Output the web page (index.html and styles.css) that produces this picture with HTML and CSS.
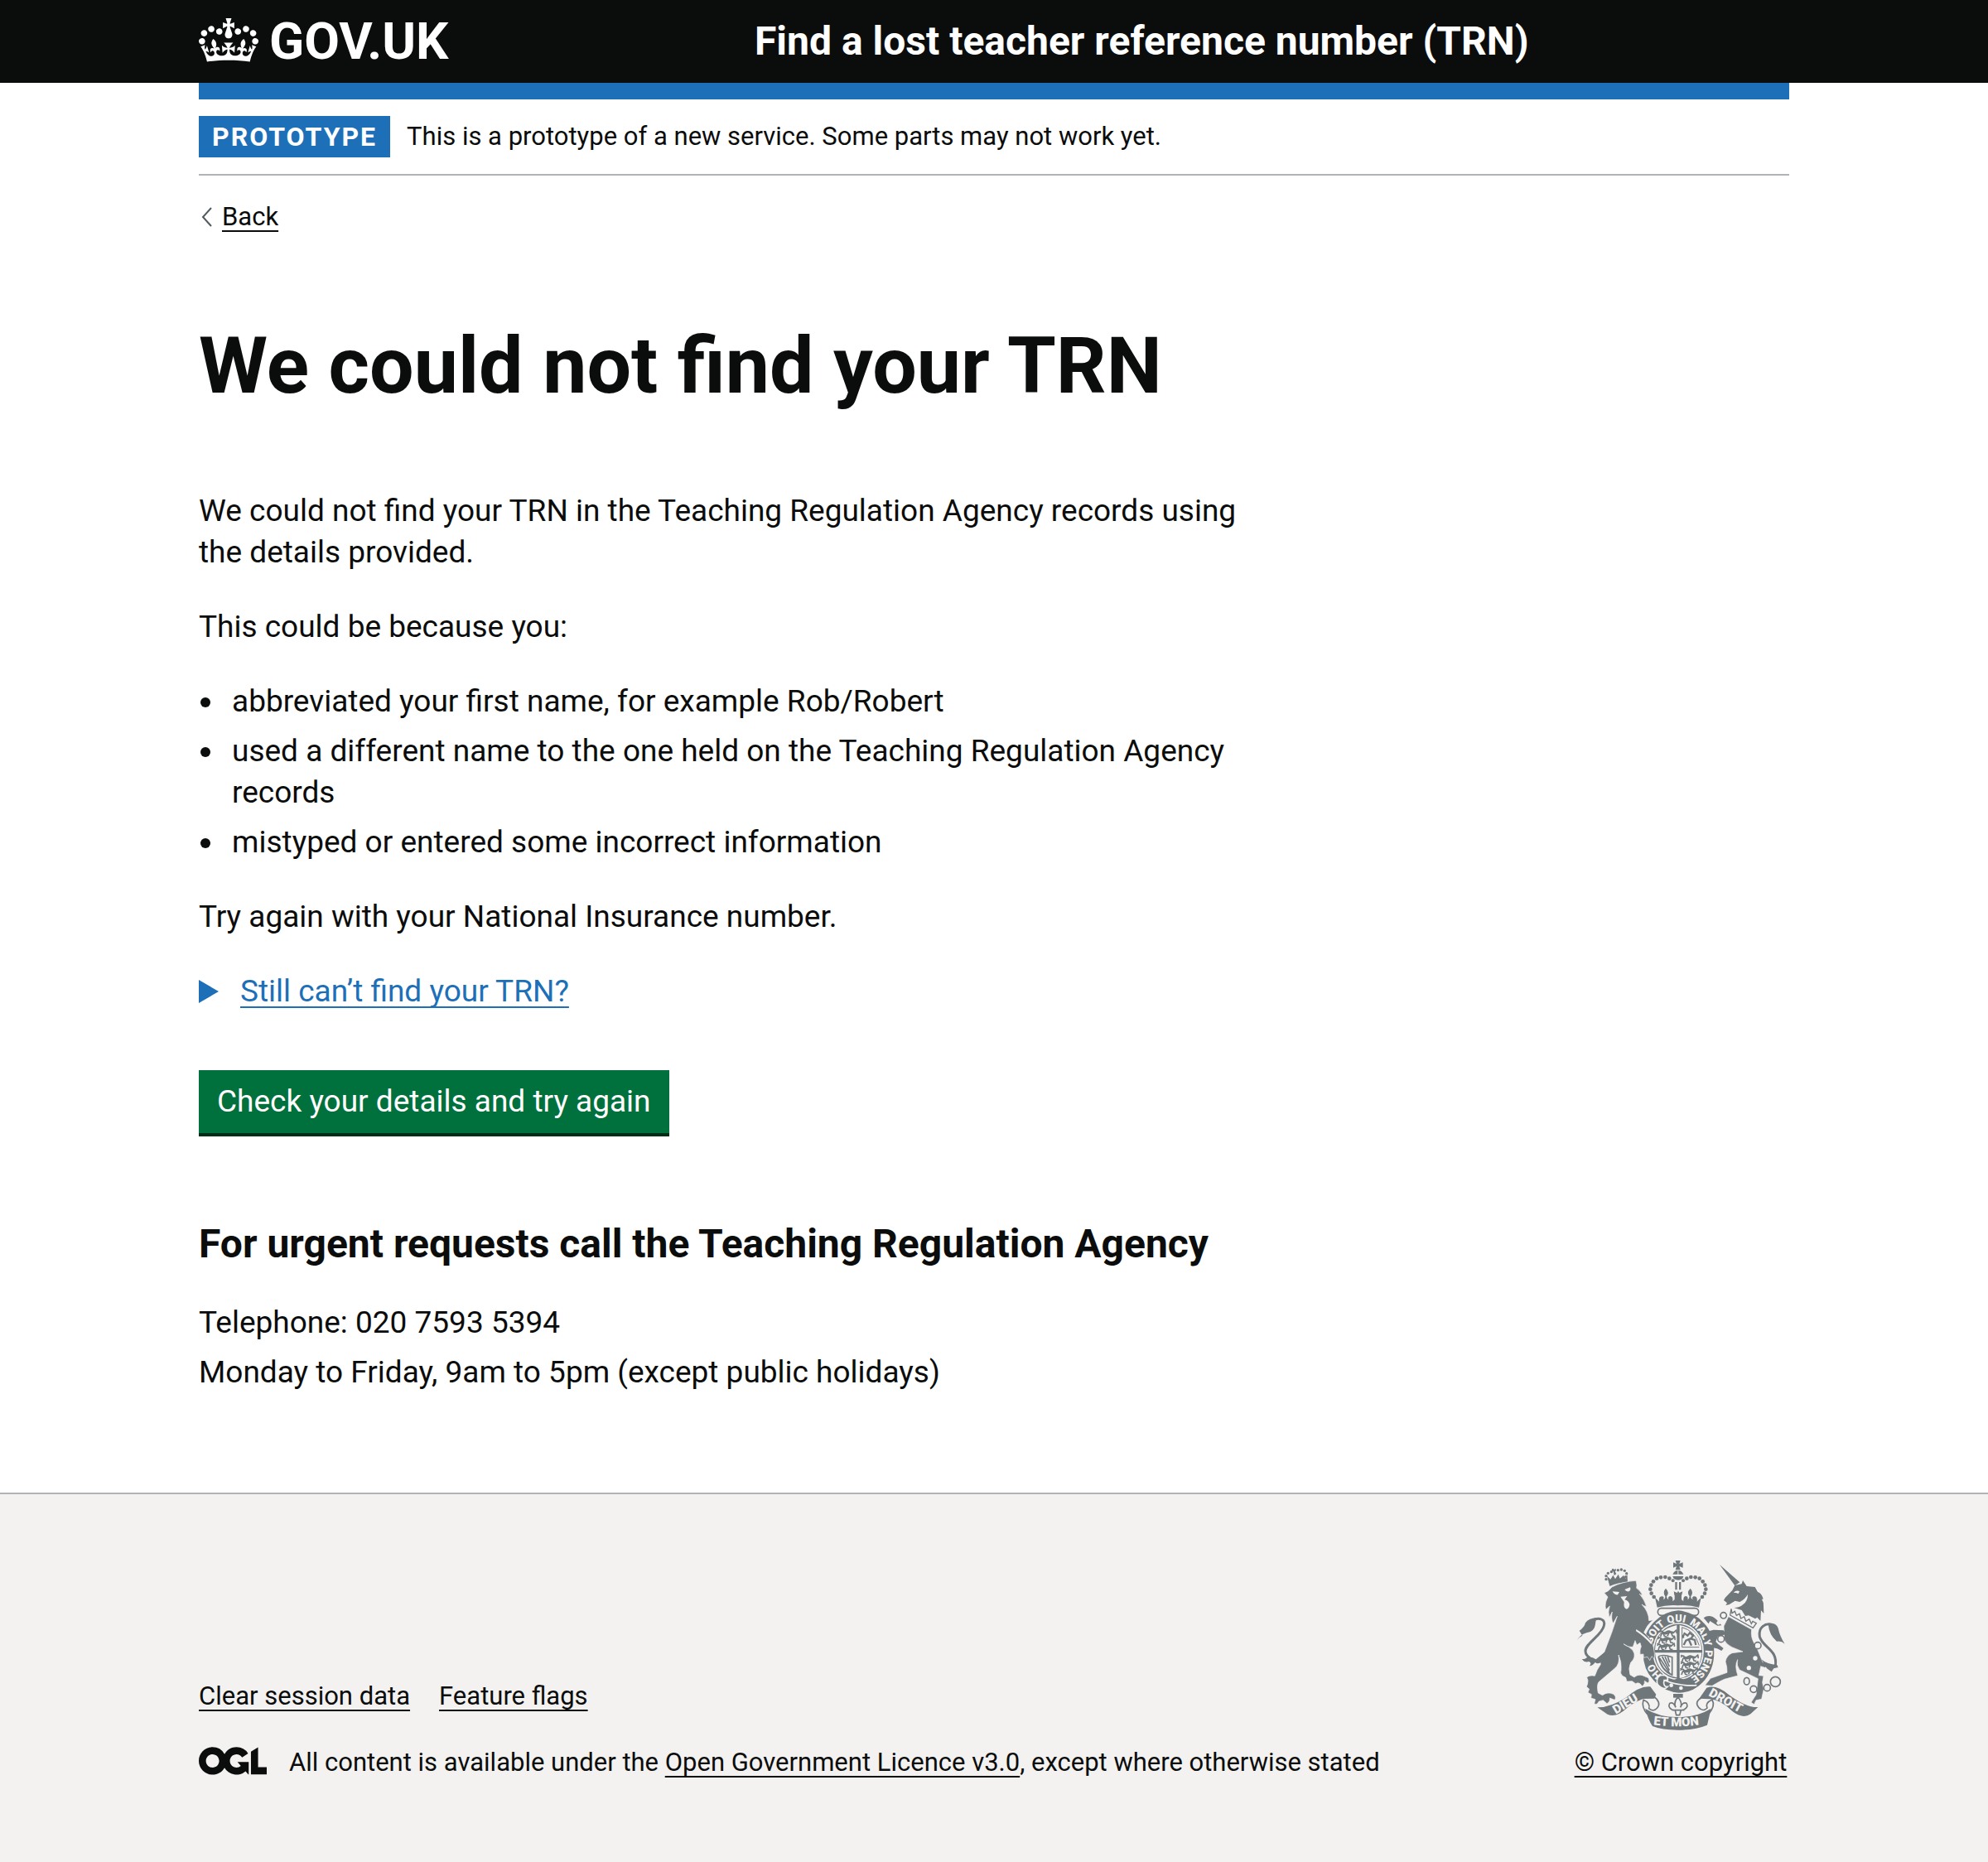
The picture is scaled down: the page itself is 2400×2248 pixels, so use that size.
FILE: index.html
```html
<!DOCTYPE html>
<html lang="en">
<head>
  <meta charset="utf-8">
  <meta name="viewport" content="width=device-width, initial-scale=1">
  <title>We could not find your TRN - GOV.UK</title>
  <link rel="stylesheet" href="styles.css">
</head>
<body>
  <header class="header">
    <div class="container header-inner">
      <a class="logo" href="#" aria-label="GOV.UK">
        <svg class="logo-crown" viewBox="0 0 132 97" aria-hidden="true"><path fill="currentColor" fill-rule="evenodd" d="M25 30.2c3.5 1.5 7.7-.2 9.1-3.7 1.5-3.6-.2-7.8-3.9-9.2-3.6-1.4-7.6.3-9.1 3.9-1.4 3.5.3 7.5 3.9 9zM9 39.5c3.6 1.5 7.8-.2 9.2-3.7 1.5-3.6-.2-7.8-3.9-9.1-3.6-1.5-7.6.2-9.1 3.8-1.4 3.5.3 7.5 3.8 9zM4.4 57.2c3.5 1.5 7.7-.2 9.1-3.8 1.5-3.6-.2-7.7-3.9-9.1-3.5-1.5-7.6.3-9.1 3.8-1.4 3.5.3 7.6 3.9 9.1zm38.3-21.4c3.5 1.5 7.7-.2 9.1-3.8 1.5-3.6-.2-7.7-3.9-9.1-3.6-1.5-7.6.3-9.1 3.8-1.3 3.6.4 7.7 3.9 9.1zm64.4-5.6c-3.6 1.5-7.8-.2-9.1-3.7-1.5-3.6.2-7.8 3.8-9.2 3.6-1.4 7.7.3 9.2 3.9 1.3 3.5-.4 7.5-3.9 9zm15.9 9.3c-3.6 1.5-7.7-.2-9.1-3.7-1.5-3.6.2-7.8 3.7-9.1 3.6-1.5 7.7.2 9.2 3.8 1.5 3.5-.3 7.5-3.8 9zm4.7 17.7c-3.6 1.5-7.8-.2-9.2-3.8-1.5-3.6.2-7.7 3.9-9.1 3.6-1.5 7.7.3 9.2 3.8 1.3 3.5-.4 7.6-3.9 9.1zM89.3 35.8c-3.6 1.5-7.8-.2-9.2-3.8-1.4-3.6.2-7.7 3.9-9.1 3.6-1.5 7.7.3 9.2 3.8 1.4 3.6-.3 7.7-3.9 9.1zM69.7 17.7l8.9 4.7V9.3l-8.9 2.8c-.2-.3-.5-.6-.9-.9L72.4 0H59.6l3.5 11.2c-.3.3-.6.5-.9.9l-8.8-2.8v13.1l8.8-4.7c.3.3.6.7.9.9l-5 15.4v.1c-.2.8-.4 1.6-.4 2.4 0 4.1 3.1 7.5 7 8.1h.2c.3 0 .7.1 1 .1.4 0 .7 0 1-.1h.2c4-.6 7.1-4.1 7.1-8.1 0-.8-.1-1.7-.4-2.4V34l-5.1-15.4c.4-.2.7-.6 1-.9zM66 92.8c16.9 0 32.8 1.1 47.1 3.2 4-16.9 8.9-26.7 14-33.5l-9.6-3.4c1 4.9 1.1 7.2 0 10.2-1.5-1.4-3-4.3-4.2-8.7L108.6 76c2.8-2 5-3.2 7.5-3.3-4.4 9.4-10 11.9-13.6 11.2-4.3-.8-6.3-4.6-5.6-7.9 1-4.7 5.7-5.9 8-.5 4.3-8.7-3-11.4-7.6-8.8 7.1-7.2 7.9-13.5 2.1-21.1-8 6.1-8.1 12.3-4.5 20.8-4.7-5.4-12.1-2.5-9.5 6.2 3.4-5.2 7.9-2 7.2 3.1-.6 4.3-6.4 7.8-13.5 7.2-10.3-.9-10.9-8-11.2-13.8 2.5-.5 7.1 1.8 11 7.3L80.2 60c-4.1 4.4-8 5.3-12.3 5.4 1.4-4.4 8-11.6 8-11.6H55.5s6.4 7.2 7.9 11.6c-4.2-.1-8-1-12.3-5.4l1.4 16.4c3.9-5.5 8.5-7.7 10.9-7.3-.3 5.8-.9 12.8-11.1 13.8-7.2.6-12.9-2.9-13.5-7.2-.7-5 3.8-8.3 7.1-3.1 2.7-8.7-4.6-11.6-9.4-6.2 3.7-8.5 3.6-14.7-4.6-20.8-5.8 7.6-5 13.9 2.2 21.1-4.7-2.6-11.9.1-7.7 8.8 2.3-5.5 7.1-4.2 8.1.5.7 3.3-1.3 7.1-5.7 7.9-3.5.7-9-1.8-13.5-11.2 2.5.1 4.7 1.3 7.5 3.3l-4.7-15.4c-1.2 4.4-2.7 7.2-4.3 8.7-1.1-3-.9-5.3 0-10.2l-9.5 3.4c5 6.9 9.9 16.7 14 33.5 14.8-2.1 30.8-3.2 47.7-3.2z"/></svg>
        <span class="logo-text">GOV.UK</span>
      </a>
      <a class="service-name" href="#">Find a lost teacher reference number (TRN)</a>
    </div>
  </header>

  <div class="container">
    <div class="phase-banner">
      <strong class="tag">PROTOTYPE</strong>
      <span>This is a prototype of a new service. Some parts may not work yet.</span>
    </div>

    <a class="back-link" href="#">
      <svg class="back-icon" viewBox="0 0 14 24" aria-hidden="true"><path d="M13 1 3 12l10 11" fill="none" stroke="#505a5f" stroke-width="2"/></svg>
      <span class="underlined">Back</span>
    </a>

    <main class="main">
      <h1 class="title">We could not find your TRN</h1>
      <p>We could not find your TRN in the Teaching Regulation Agency records using the details provided.</p>
      <p>This could be because you:</p>
      <ul class="reasons">
        <li>abbreviated your first name, for example Rob/Robert</li>
        <li>used a different name to the one held on the Teaching Regulation Agency records</li>
        <li>mistyped or entered some incorrect information</li>
      </ul>
      <p>Try again with your National Insurance number.</p>
      <details class="details">
        <summary class="summary"><span class="underlined">Still can’t find your TRN?</span></summary>
      </details>
      <button class="button" type="button">Check your details and try again</button>
      <h2 class="subtitle">For urgent requests call the Teaching Regulation Agency</h2>
      <ul class="contact">
        <li>Telephone: 020 7593 5394</li>
        <li>Monday to Friday, 9am to 5pm (except public holidays)</li>
      </ul>
    </main>
  </div>

  <footer class="footer">
    <div class="container footer-inner">
      <div class="footer-meta">
        <ul class="footer-links">
          <li><a class="underlined" href="#">Clear session data</a></li>
          <li><a class="underlined" href="#">Feature flags</a></li>
        </ul>
        <div class="licence">
          <svg class="ogl" viewBox="0 0 483 196" aria-hidden="true"><path fill="currentColor" d="M421.5 142.8V.1l-50.7 32.3v161.1h112.4v-50.7zm-122.3-9.6A47.12 47.12 0 0 1 221 97.8c0-26 21.1-47.1 47.1-47.1 16.7 0 31.4 8.7 39.7 21.8l42.7-27.2A97.63 97.63 0 0 0 268.1 0c-36.5 0-68.3 20.1-85.1 49.7A98 98 0 0 0 97.8 0C43.9 0 0 43.9 0 97.8s43.9 97.8 97.8 97.8c36.5 0 68.3-20.1 85.1-49.7a97.76 97.76 0 0 0 149.6 25.4l19.4 22.2h3v-87.8h-80l24.3 27.5zM97.8 145c-26 0-47.1-21.1-47.1-47.1s21.1-47.1 47.1-47.1 47.1 21.1 47.1 47.1S123.8 145 97.8 145"/></svg>
          <span>All content is available under the <a class="underlined" href="#">Open Government Licence v3.0</a>, except where otherwise stated</span>
        </div>
      </div>
      <a class="copyright" href="#">
        <svg class="arms" viewBox="72 72 750 612" aria-hidden="true">
          <defs>
            <path id="garter" d="M438 508A98 107 0 0 1 438 294A98 107 0 0 1 438 508"/>
            <path id="motto" d="M348 667Q437 679 534 665"/>
            <g id="lions" fill="none" stroke="#6f777b" stroke-width="5">
              <path d="M0 8q6-8 12-2t14 0 16 1 15-3l6-5M8 12l-4 12m10-12l4 10 8 2M34 10l-5 12m14-12l4 11 9 2M0 0l6 6M56 4q8-4 6 8" /><path stroke-width="8" d="M8 9q12 6 22 1t22 0"/>
            </g>
            <g id="halfcrown">
              <g fill="#6f777b"><circle cx="419" cy="145" r="6"/><circle cx="406" cy="137" r="7"/><circle cx="391" cy="132" r="7"/><circle cx="375" cy="133" r="7"/><circle cx="360" cy="137" r="7"/><circle cx="348" cy="148" r="7"/><circle cx="340" cy="161" r="7"/><circle cx="337" cy="176" r="7"/><circle cx="341" cy="191" r="7"/><circle cx="350" cy="204" r="7"/>
              <path d="M362 242L354 206Q361 212 369 221Q366 200 381 202Q389 204 384 213Q392 211 391 202Q380 186 393 173Q408 188 396 202Q397 212 403 214Q399 203 409 201Q420 201 418 220L429 209L423 190H438V235Q396 232 362 242Z"/></g>
            </g>
          </defs>
          <use href="#halfcrown"/><use href="#halfcrown" transform="matrix(-1 0 0 1 875 0)"/>
          <g fill="#6f777b">
            <path d="M428 72h18l-4 12 13-5v19l-13-5 4 13h-18l4-13-12 5V79l12 5zM418 122h18v-14l-9 2q-6 5-9 12zm39 0h-18v-14l9 2q6 5 9 12zM418 129h39q-2 14-19 14t-20-14z"/>
            <path d="M427 150h7v28h-7zm14 0h7v28h-7zM422 184l12 5 4-7 4 7 12-5-4 15v14h-25v-14z"/>
          </g>
          <rect x="364" y="245" width="148" height="26" rx="13" fill="#f3f2f1" stroke="#6f777b" stroke-width="5"/>
          <path fill="#6f777b" d="M438 253Q500 260 530 298Q568 335 568 405Q568 470 526 514Q490 551 440 551Q385 547 348 505Q310 465 311 405Q309 335 352 293Q390 256 438 253Z"/>
          <ellipse cx="438" cy="401" rx="90" ry="101" fill="#6f777b" stroke="#f3f2f1" stroke-width="5"/>
          <g fill="#f3f2f1">
            <path d="M433 306V396H354Q357 322 433 306ZM443 306Q519 319 523 396H443ZM433 406V496Q360 484 354 406ZM443 406H523Q518 485 443 498Z"/>
          </g>
          <use href="#lions" x="370" y="324"/><use href="#lions" x="364" y="348"/><use href="#lions" x="362" y="372"/>
          <use href="#lions" x="448" y="414"/><use href="#lions" x="448" y="438"/><use href="#lions" x="446" y="462"/>
          <g fill="none" stroke="#6f777b">
            <path stroke-width="3" d="M452 314v72h62M452 314q46 12 62 66"/>
            <path stroke-width="7" d="M458 334l14 10 8-10 12 10-8 12 14 4 4 18M484 354l-18 8-8 16m18-20l10 22M458 352q-6-6 2-12"/>
            <path stroke-width="5" d="M366 420q16-10 50 2v65q-38-16-50-67M370 424l38 58M380 420l26 50M390 420l16 36M400 420l7 22"/>
          </g>
          <path fill="#6f777b" d="M424 505l14-9 28 9 4 9h-40z"/>
          <g class="arms-text">
            <text><textPath href="#garter" startOffset="64">HO</textPath></text>
            <text><textPath href="#garter" startOffset="188">SOIT</textPath></text>
            <text><textPath href="#garter" startOffset="284">QUI</textPath></text>
            <text><textPath href="#garter" startOffset="362">MAL</textPath></text>
            <text><textPath href="#garter" startOffset="442">Y</textPath></text>
            <text><textPath href="#garter" startOffset="478">PENSE</textPath></text>
          </g>
          <path fill="none" stroke="#f3f2f1" stroke-width="5" d="M385 505Q440 528 505 524M362 505q0-18 20-18t18 18q-16-2-14 12t14 12q-10 12-26 2t-12-26"/>
          <circle cx="413" cy="524" r="7" fill="#f3f2f1"/><circle cx="448" cy="534" r="7" fill="#f3f2f1"/>

          <!-- lion -->
          <g fill="#6f777b">
            <path d="M190 165L180 128l13 12 9-15 8 14 11-17 6 15 13-11 8 12 5-17 2 29Q220 151 190 165Z"/>
            <circle cx="177" cy="140" r="5"/><circle cx="177" cy="128" r="5"/><circle cx="184" cy="118" r="5"/><circle cx="196" cy="113" r="5"/><circle cx="220" cy="107" r="5"/><circle cx="232" cy="105" r="5"/><circle cx="244" cy="109" r="5"/><circle cx="251" cy="119" r="5"/><circle cx="248" cy="131" r="5"/><path d="M202 101l5 4 5-4 1 8-4 2 5 10-8 5-3-14-6-1 1-8z"/>
            <path stroke="#f3f2f1" stroke-width="2" d="M170 189Q187 184 198 168Q237 148 285 145Q290 160 287 172Q302 182 308 197Q302 198 298 193Q316 215 323 238Q314 238 306 231Q332 258 332 290L347 287Q325 305 314 332Q343 358 349 387Q354 410 352 428L342 419L335 434L327 421L313 424L312 411L300 412Q298 395 304 383L300 370L288 378L282 362L274 385Q252 386 240 374Q262 384 274 398Q288 421 266 442Q256 462 264 486L279 495Q290 484 308 488L330 497Q337 509 328 516L316 508Q319 518 308 528Q297 510 284 518L271 509L252 510L248 496L236 490Q226 480 231 470Q234 439 222 414Q228 446 208 463L150 512Q142 524 148 552L164 560Q181 546 203 556Q216 565 208 577L190 570Q192 583 180 590L166 578L151 582Q143 597 134 590L138 575L122 570L124 557L111 550L116 538L106 529Q111 520 111 506L107 495Q117 486 136 490Q142 469 157 448Q149 424 170 405L198 331L217 274L202 300Q194 283 199 258L189 278Q182 259 190 237L176 250Q170 229 183 204Z"/>
            <path d="M72 361Q78 349 91 344L80 326Q98 315 102 298Q112 280 149 279Q138 286 138 302Q135 330 106 334Q81 342 72 361ZM89 430Q102 430 108 423Q123 418 140 430L174 402L157 442Q142 449 138 440Q129 452 117 454Q126 443 115 438Q99 443 89 430Z"/>
          </g>
          <path fill="none" stroke="#6f777b" stroke-width="9" d="M128 289C151 275 176 286 169 308C163 342 99 374 102 401Q103 416 119 425"/>
          <g fill="#f3f2f1"><path d="M200 184l25 2-6 10q-12 2-19-12zm44-7l20-8q4 12-5 15-9 2-15-7zM229 203l24-2-9 13q15 4 18 17-2 15-11 17-12-2-9-26z"/><path d="M286 321Q318 340 343 370L340 376Q314 346 285 328Z"/></g>

          <!-- unicorn -->
          <g fill="#6f777b">
            <path d="M588 87L661 151L643 163Z"/>
            <path d="M643 162L668 157L672 144L686 165L716 168L726 186Q740 190 746 211L741 213Q748 224 747 235L748 264L738 253L736 291L724 278L717 283L693 271L681 273L668 252L640 243Q660 243 674 230Q690 218 690 194Q682 211 661 222L644 218L622 232L610 234L615 226L603 216L608 207L634 180Z"/>
            <path stroke="#f3f2f1" stroke-width="2" d="M620 275L704 322Q698 353 722 386L744 440Q763 444 768 452L752 460L737 455L730 488L747 490L743 514L748 537L740 574L720 578L713 593L702 586L720 558L727 500L690 482L660 468Q648 452 653 431Q641 454 654 489L605 502Q585 511 561 526L535 524L555 499L615 478Q616 458 609 438Q613 416 633 407L672 402L633 386Q612 376 605 360L603 310Z"/>
            <path d="M530 280Q545 269 563 276Q574 280 595 307L580 308L553 291L548 301ZM543 329L566 323L602 325L612 340L582 346L574 366L582 374L602 390L595 399L579 391L562 388L563 372L551 355L553 343L541 341Z"/>
            <path d="M764 302Q792 295 800 317Q806 346 824 374Q812 362 795 365Q767 341 764 302ZM739 430Q759 448 796 450L800 459L784 463L776 475L759 463Z"/>
          </g>
          <path fill="none" stroke="#6f777b" stroke-width="9" d="M790 455C799 393 745 389 733 348C727 314 753 297 779 304"/>
          <path fill="#f3f2f1" d="M638 188q12-10 22-4l-4 8q-8-4-18-4z"/>
          <path fill="#f3f2f1" stroke="#6f777b" stroke-width="4" d="M630 247L626 270L709 316L721 299L708 292L703 301L695 284L683 292L677 275L665 282L660 265L649 271L643 256L633 263Z"/>
          <g fill="none" stroke="#6f777b" stroke-width="5"><circle cx="602" cy="271" r="11"/><circle cx="593" cy="356" r="12"/><circle cx="726" cy="380" r="12" fill="#f3f2f1"/><ellipse cx="686" cy="509" rx="10" ry="13"/><circle cx="711" cy="538" r="12"/><circle cx="760" cy="533" r="12"/><circle cx="790" cy="511" r="18"/></g>
          <g fill="#f3f2f1"><circle cx="717" cy="426" r="8"/><circle cx="694" cy="461" r="8"/><circle cx="584" cy="298" r="7"/></g>

          <!-- motto scroll -->
          <g fill="#6f777b">
            <path d="M145 604Q190 606 250 568Q300 524 337 529L358 557L352 572L310 573Q270 590 252 607Q212 644 182 629Z"/>
            <path d="M727 603Q686 606 620 557Q575 520 541 533L514 572L552 574Q592 576 635 619Q673 647 700 628Z"/>
            <path d="M318 608Q370 640 438 639Q507 639 557 608L543 668Q500 686 437 686Q380 686 345 672Q330 650 318 608Z"/>
          </g>
          <g fill="none" stroke="#6f777b" stroke-width="5"><path d="M351 565Q378 587 362 606Q348 622 332 608Q338 588 312 577Q304 604 326 628"/><path d="M521 570Q496 584 512 604Q528 622 543 606Q534 588 561 576Q574 599 548 628"/><path fill="#f3f2f1" d="M437 567Q455 588 446 604Q454 583 468 589Q476 603 459 612L448 615L443 632H431L427 615L415 612Q399 602 408 589Q421 583 429 604Q420 585 437 567ZM416 614H460"/></g>
          <path fill="#6f777b" d="M420 555h35v14h-35z"/>
          <g class="arms-text arms-motto">
            <text transform="translate(212 629) rotate(-31)">DIEU</text>
            <text transform="translate(546 560) rotate(29)">DROIT</text>
            <text><textPath href="#motto">ET MON</textPath></text>
          </g>
        </svg>
        <span class="underlined">© Crown copyright</span>
      </a>
    </div>
  </footer>
</body>
</html>
```
FILE: styles.css
```css
* {
  box-sizing: border-box;
}

body {
  margin: 0;
  background: #f3f2f1;
  color: #0b0c0c;
  font-family: Roboto, "Liberation Sans", sans-serif;
  font-size: 37px;
  line-height: 50px;
}

body > .container {
  max-width: none;
  padding: 0 max(60px, calc(50% - 960px));
  background: #fff;
}

a {
  color: inherit;
  text-decoration: none;
}

ul {
  margin: 0;
  padding: 0;
  list-style: none;
}

p {
  margin: 0 0 40px;
}

.container {
  max-width: 2040px;
  margin: 0 auto;
  padding: 0 60px;
}

.underlined {
  text-decoration: underline;
  text-decoration-thickness: 2px;
  text-underline-offset: 6px;
  text-decoration-skip-ink: none;
}

/* Header */
.header {
  background: #0b0c0c;
  color: #fff;
}

.header-inner {
  display: grid;
  grid-template-columns: 671px 1fr;
  align-items: center;
  height: 100px;
}

.logo {
  display: flex;
  align-items: center;
  gap: 13px;
}

.logo-crown {
  width: 72px;
  height: 53px;
  margin-bottom: 4px;
}

.logo-text {
  font-size: 62px;
  font-weight: 700;
  line-height: 98px;
}

.service-name {
  font-size: 48px;
  font-weight: 700;
}

/* Phase banner */
.phase-banner {
  display: flex;
  align-items: center;
  gap: 20px;
  padding: 20px 0;
  border-top: 20px solid #1d70b8;
  border-bottom: 2px solid #b1b4b6;
  font-size: 31px;
}

.tag {
  padding: 0 16px;
  background: #1d70b8;
  color: #fff;
  font-size: 32px;
  font-weight: 700;
  letter-spacing: 2px;
}

.back-link {
  display: flex;
  align-items: center;
  gap: 12px;
  width: fit-content;
  margin-top: 30px;
  padding-left: 2px;
  font-size: 31px;
  line-height: 40px;
}

.back-icon {
  width: 14px;
  height: 24px;
}

/* Content */
.main {
  max-width: 1260px;
  padding: 110px 0 110px;
}

.title {
  margin: 0 0 100px;
  font-size: 95px;
  font-weight: 700;
  line-height: 100px;
}

.reasons {
  margin-bottom: 40px;
}

.reasons li,
.contact li {
  margin-bottom: 10px;
}

.reasons li {
  display: flex;
  gap: 26px;
  padding-left: 2px;
}

.reasons li::before {
  content: "";
  flex: none;
  width: 12px;
  height: 12px;
  margin-top: 20px;
  border-radius: 50%;
  background: currentColor;
}

.details {
  margin-bottom: 70px;
  color: #1d70b8;
}

.summary {
  display: flex;
  align-items: center;
  gap: 26px;
}

.summary::before {
  content: "";
  border-style: solid;
  border-width: 14px 0 14px 24px;
  border-color: transparent transparent transparent #1d70b8;
}

.button {
  display: block;
  padding: 13px 22px;
  border: 0;
  background: #00703c;
  box-shadow: 0 4px 0 #002d18;
  color: #fff;
  font: inherit;
}

.subtitle {
  margin: 104px 0 40px;
  font-size: 48px;
  font-weight: 700;
  line-height: 60px;
}

/* Footer */
.footer {
  border-top: 2px solid #b1b4b6;
  background: #f3f2f1;
  font-size: 31px;
  line-height: 40px;
}

.footer-inner {
  display: flex;
  justify-content: space-between;
  align-items: flex-end;
  padding-top: 80px;
  padding-bottom: 100px;
}

.footer-links {
  display: flex;
  gap: 35px;
  margin-bottom: 40px;
}

.licence {
  display: flex;
  align-items: center;
  gap: 27px;
}

.ogl {
  width: 82px;
  height: 34px;
  margin-bottom: 4px;
}

.copyright {
  display: flex;
  flex-direction: column;
  align-items: center;
  gap: 20px;
  min-width: 262px;
}

.arms {
  width: 250px;
  height: 204px;
  overflow: visible;
}

.arms-text {
  fill: #f3f2f1;
  font-size: 38px;
  font-weight: 900;
}

.arms-motto {
  font-size: 45px;
}
```
